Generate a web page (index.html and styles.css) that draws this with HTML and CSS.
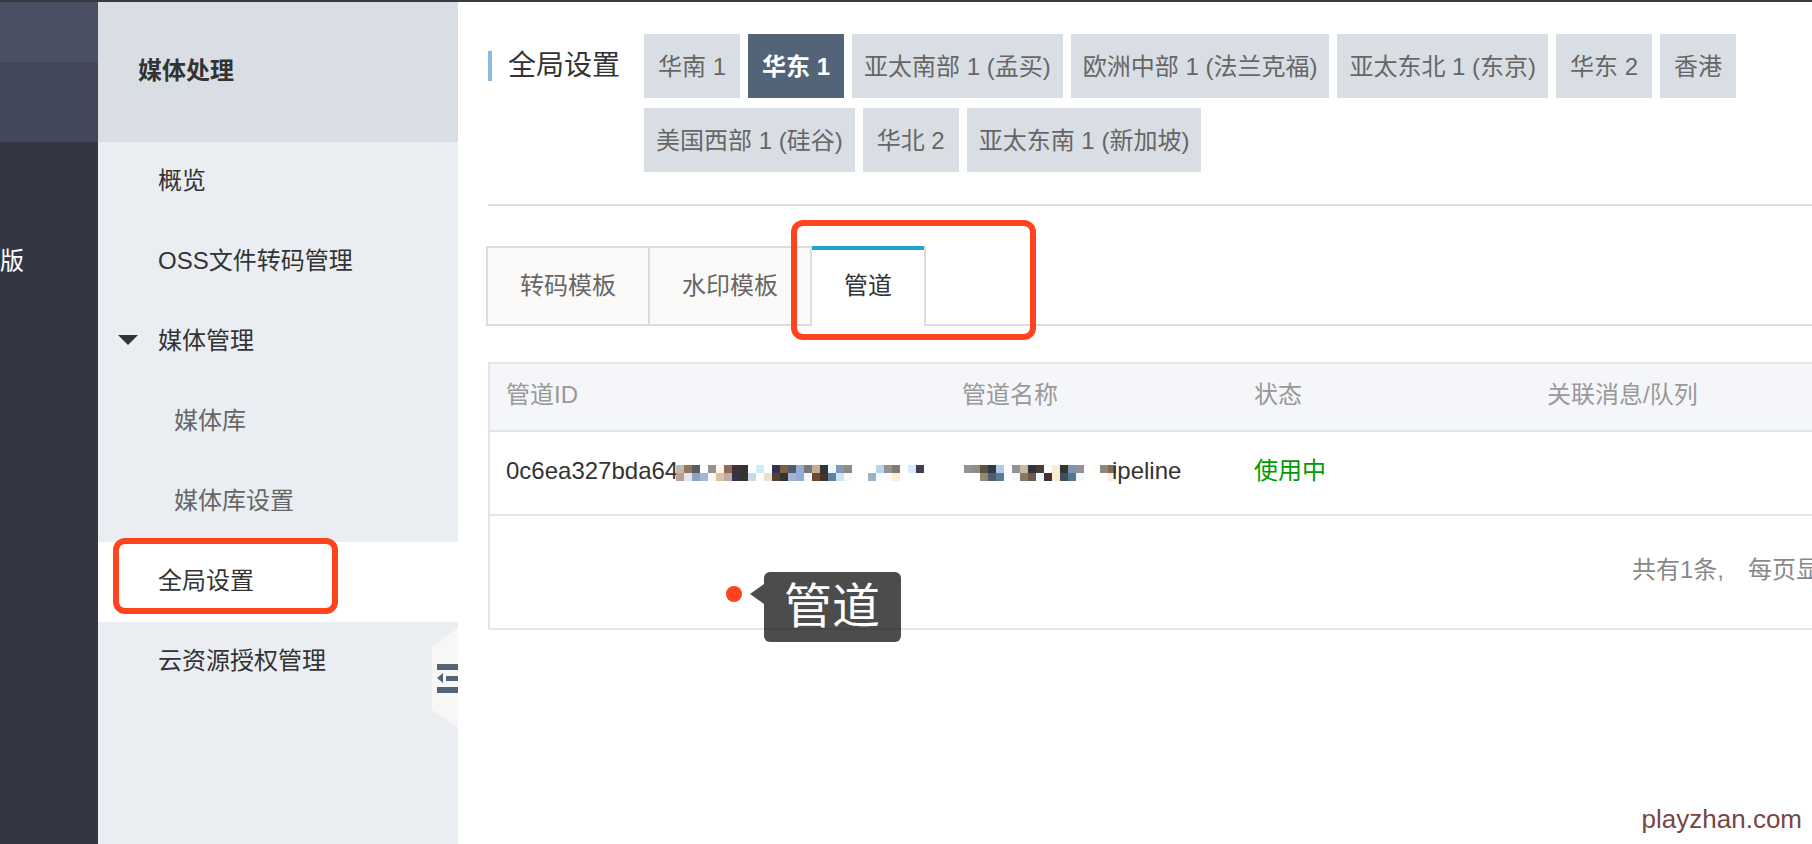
FILE: index.html
```html
<!DOCTYPE html>
<html lang="zh-CN">
<head>
<meta charset="utf-8">
<title>媒体处理 - 全局设置</title>
<link rel="stylesheet" href="styles.css">
</head>
<body>
<div class="app">
  <div class="topbar"></div>
  <div class="body">
    <div class="rail">
      <div class="rail-toggle"></div>
      <div class="rail-group"></div>
      <div class="rail-item">版</div>
    </div>
    <aside class="sidebar">
      <h2 class="sidebar-title">媒体处理</h2>
      <nav class="menu">
        <a class="menu-item" href="#">概览</a>
        <a class="menu-item" href="#">OSS文件转码管理</a>
        <a class="menu-item expanded" href="#">媒体管理</a>
        <a class="menu-item sub" href="#">媒体库</a>
        <a class="menu-item sub" href="#">媒体库设置</a>
        <a class="menu-item active" href="#">全局设置<span class="mark mark-menu"></span></a>
        <a class="menu-item" href="#">云资源授权管理</a>
      </nav>
      <button class="collapse" type="button" aria-label="收起菜单">
        <svg width="26" height="100" viewBox="0 0 26 100"><path fill="#f7f7f7" d="M26 0 0 18v64l26 18z"/><path fill="#546478" d="M5 36h21v6H5zM14 48h12v5H14zM5 59h21v6H5zM11 45v10L5 50z"/></svg>
      </button>
    </aside>
    <main class="main">
      <header class="page-head">
        <h1 class="page-title">全局设置</h1>
        <div class="regions">
          <button class="region" type="button">华南 1</button>
          <button class="region selected" type="button">华东 1</button>
          <button class="region city" type="button">亚太南部 1 (孟买)</button>
          <button class="region city" type="button">欧洲中部 1 (法兰克福)</button>
          <button class="region city" type="button">亚太东北 1 (东京)</button>
          <button class="region" type="button">华东 2</button>
          <button class="region" type="button">香港</button>
          <button class="region city" type="button">美国西部 1 (硅谷)</button>
          <button class="region" type="button">华北 2</button>
          <button class="region city" type="button">亚太东南 1 (新加坡)</button>
        </div>
      </header>
      <div class="tabs">
        <button class="tab" type="button">转码模板</button>
        <button class="tab" type="button">水印模板</button>
        <button class="tab current" type="button">管道<span class="mark mark-tab"></span></button>
      </div>
      <div class="panel">
        <table class="pipes">
          <thead>
            <tr><th class="col-id">管道ID</th><th class="col-name">管道名称</th><th class="col-state">状态</th><th>关联消息/队列</th></tr>
          </thead>
          <tbody>
            <tr>
              <td><div class="cell">0c6ea327bda64<svg class="mosaic mosaic-id" width="248" height="16" viewBox="0 0 31 2" shape-rendering="crispEdges" data-cells="c4b8ac 94775b 565e69 - 929390 fff6e8 906a60 412f31 333333 - d1ebf5 - 34334f 7c6340 535a69 95aad4 7a7777 c4ad92 333333 e6faff 8796bb 908b83 - - - b3d5f0 929390 807b72 - d7ebf7 403b50 b9a08f e6e6ea 8ca4b8 a2b7da faf6f4 dfc0a5 bcae9a 33334f 333333 c9dae7 - eae0d0 593f32 333333 a2b3cc 95aad4 f5f6fa 704831 463131 6480a2 cce6f6 f9f8f5 - - 9fb1c6 f5fdff fffaf8 ffecd2 - - -"></svg></div></td>
              <td><div class="cell"><svg class="mosaic mosaic-name" width="152" height="16" viewBox="0 0 19 2" shape-rendering="crispEdges" data-cells="929390 908b83 5c523f 343846 b1cceb - 929194 c8b8a4 33333b 483f32 f8feff faebd2 333333 7896b4 909398 - fffdf8 908582 876a4c - - 958871 505d74 5a7c8e - f6f7f9 8d765e 6c5a50 e8f8ff 473031 faebd2 3f4e5b 54768f f5f8fa - - - f6efea b99c82"></svg>ipeline</div></td>
              <td class="ok">使用中</td>
              <td></td>
            </tr>
          </tbody>
        </table>
        <div class="pager"><span>共有1条,</span><span>每页显</span></div>
        <div class="note"><span class="note-dot"></span><span class="note-label">管道</span></div>
      </div>
      <div class="watermark">playzhan.com</div>
    </main>
  </div>
</div>
<script src="mosaic.js"></script>
</body>
</html>
```
FILE: mosaic.js
```js
// Fills each two-row mosaic from its list of cell colours.
document.querySelectorAll('.mosaic').forEach(function (svg) {
  var cells = svg.dataset.cells.split(' ');
  var columns = svg.viewBox.baseVal.width;
  cells.forEach(function (colour, i) {
    if (colour === '-') return;
    var rect = document.createElementNS('http://www.w3.org/2000/svg', 'rect');
    rect.setAttribute('x', i % columns);
    rect.setAttribute('y', Math.floor(i / columns));
    rect.setAttribute('width', 1);
    rect.setAttribute('height', 1);
    rect.setAttribute('fill', '#' + colour);
    svg.appendChild(rect);
  });
});
```
FILE: styles.css
```css
* { box-sizing: border-box; }
body {
  margin: 0;
  font-family: "Liberation Sans", "Noto Sans CJK SC", sans-serif;
  font-size: 24px;
  line-height: 36px;
  color: #333;
  background: #fff;
}
button { font: inherit; color: inherit; border: 0; margin: 0; cursor: pointer; }
.app { display: flex; flex-direction: column; min-height: 100vh; overflow: hidden; }
.topbar { height: 2px; background: #393a3f; }
.body { display: flex; flex: 1; }

.rail { flex: 0 0 98px; background: #333743; color: #fff; }
.rail-toggle { height: 60px; background: #4a5064; }
.rail-group { height: 80px; background: #42475a; }
.rail-item { padding-top: 80px; line-height: 78px; }

.sidebar { position: relative; flex: 0 0 360px; background: #eaedf1; }
.sidebar-title {
  margin: 0; height: 140px; padding-left: 40px;
  font-size: 24px; line-height: 138px; font-weight: 700;
  background: #d9dee4;
}
.menu-item {
  position: relative; display: block; padding: 0 0 2px 60px;
  line-height: 78px; color: #333; text-decoration: none;
}
.menu-item.sub { padding-left: 76px; color: #666; }
.menu-item.active { background: #fff; }
.menu-item.expanded::before {
  content: ""; position: absolute; left: 20px; top: 33px;
  border: 10px solid transparent; border-top-color: #333; border-bottom: 0;
}
.collapse {
  position: absolute; right: 0; top: 626px;
  padding: 0; background: none;
}
.collapse svg { display: block; }

.mark { position: absolute; border: 6px solid #ff431c; border-radius: 12px; pointer-events: none; }
.mark-menu { left: 15px; top: -4px; width: 225px; height: 76px; }
.mark-tab { left: -21px; top: -26px; width: 245px; height: 120px; z-index: 1; }

.main { flex: 1; min-width: 0; padding-left: 30px; display: flex; flex-direction: column; }
.page-head {
  display: flex; align-items: flex-start; gap: 24px;
  padding: 32px 0; border-bottom: 2px solid #ddd;
}
.page-title {
  margin: 0; padding: 16px 0; flex: none; display: flex; align-items: center; gap: 16px;
  font-size: 28px; line-height: 32px; font-weight: 400;
}
.page-title::before { content: ""; width: 4px; height: 30px; background: #8ab8de; }
.regions { display: flex; flex-wrap: wrap; gap: 10px 8px; }
.region { height: 64px; padding: 2px 14px 0; background: #d9dee4; color: #666; }
.region.city { padding-left: 12px; padding-right: 12px; }
.region.selected { background: #546478; color: #fff; font-weight: 700; }

.tabs { display: flex; margin: 40px 0 0 -2px; position: relative; }
.tabs::after { content: ""; flex: 1; border-bottom: 2px solid #ddd; }
.tab {
  height: 80px; padding: 0 32px; color: #666; background: #fbfaf8;
  border: 2px solid #ddd; border-right: 0;
}
.tab.current {
  position: relative; color: #333; background: #fff;
  border-right: 2px solid #ddd; border-top: 0; border-bottom: 0;
}
.tab.current::before {
  content: ""; position: absolute; left: 0; right: 0; top: 0;
  height: 4px; background: #1ea5cc;
}

.panel { position: relative; margin-top: 36px; border: 2px solid #e1e6eb; border-right: 0; }
.pipes { width: 100%; table-layout: fixed; border-collapse: separate; border-spacing: 0; }
.pipes th, .pipes td { padding: 0 16px; text-align: left; font-weight: 400; border-bottom: 2px solid #e1e6eb; }
.pipes th { height: 68px; padding-bottom: 4px; background: #f5f6fa; color: #999; }
.pipes td { height: 84px; padding-bottom: 4px; }
.col-id { width: 456px; }
.col-name { width: 292px; }
.col-state { width: 293px; }
.pipes td.ok { color: #090; }
.cell { display: flex; align-items: center; white-space: nowrap; }
.mosaic { flex: none; margin-top: 4px; }
.mosaic-id { margin-left: -2px; }
.mosaic-name { margin-left: 2px; margin-right: -4px; }
.pager {
  display: flex; justify-content: flex-end; gap: 24px;
  height: 112px; margin-right: -8px; line-height: 108px; color: #888; white-space: nowrap;
}
.note { position: absolute; left: 236px; top: 208px; display: flex; align-items: flex-start; gap: 22px; }
.note-dot { width: 16px; height: 16px; margin-top: 14px; border-radius: 50%; background: #ff431c; }
.note-label {
  position: relative; padding: 0 21px 0 20px; border-radius: 6px;
  background: rgba(0, 0, 0, .7); color: #fff; font-size: 48px; line-height: 70px;
}
.note-label::before {
  content: ""; position: absolute; right: 100%; top: 12px;
  border: 10px solid transparent; border-right: 14px solid rgba(0, 0, 0, .7); border-left: 0;
}
.watermark {
  margin-top: auto; padding: 0 10px 7px 0; text-align: right;
  font-size: 26px; color: #7a4545;
}
```
